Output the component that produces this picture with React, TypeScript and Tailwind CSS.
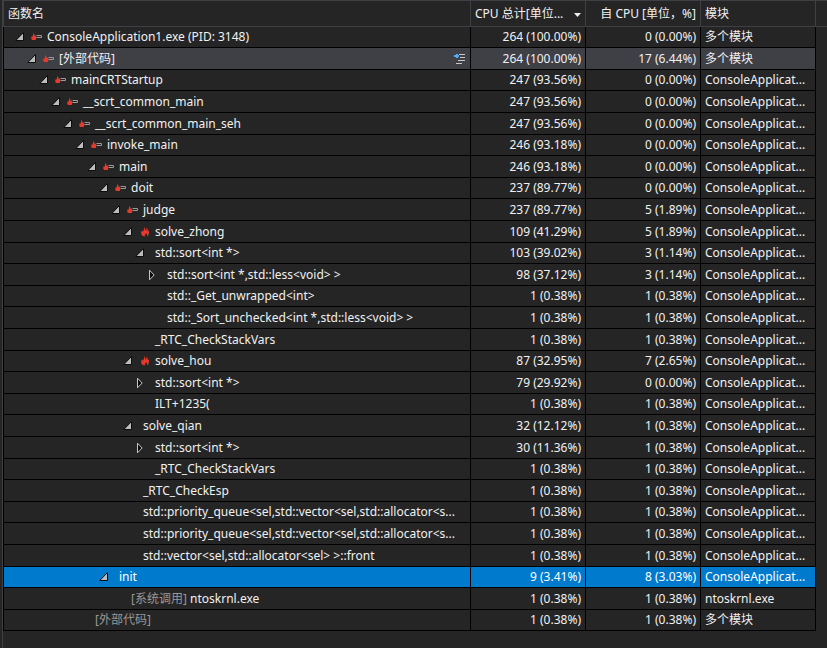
import type { ReactNode } from "react";
import { cva } from "class-variance-authority";
import clsx from "clsx";

type Icon = "path" | "flame";

interface CallNode {
  level: number;
  name: string;
  total: string;
  self: string;
  module: string;
  toggle?: "open" | "closed";
  icon?: Icon;
  prefix?: string;
  state?: "hover" | "selected";
}

const APP = "ConsoleApplicat...";
const MANY = "多个模块";

const NODES: CallNode[] = [
  { level: 0, name: "ConsoleApplication1.exe (PID: 3148)", total: "264 (100.00%)", self: "0 (0.00%)", module: MANY, toggle: "open", icon: "path" },
  { level: 1, name: "[外部代码]", total: "264 (100.00%)", self: "17 (6.44%)", module: MANY, toggle: "open", icon: "path", state: "hover" },
  { level: 2, name: "mainCRTStartup", total: "247 (93.56%)", self: "0 (0.00%)", module: APP, toggle: "open", icon: "path" },
  { level: 3, name: "__scrt_common_main", total: "247 (93.56%)", self: "0 (0.00%)", module: APP, toggle: "open", icon: "path" },
  { level: 4, name: "__scrt_common_main_seh", total: "247 (93.56%)", self: "0 (0.00%)", module: APP, toggle: "open", icon: "path" },
  { level: 5, name: "invoke_main", total: "246 (93.18%)", self: "0 (0.00%)", module: APP, toggle: "open", icon: "path" },
  { level: 6, name: "main", total: "246 (93.18%)", self: "0 (0.00%)", module: APP, toggle: "open", icon: "path" },
  { level: 7, name: "doit", total: "237 (89.77%)", self: "0 (0.00%)", module: APP, toggle: "open", icon: "path" },
  { level: 8, name: "judge", total: "237 (89.77%)", self: "5 (1.89%)", module: APP, toggle: "open", icon: "path" },
  { level: 9, name: "solve_zhong", total: "109 (41.29%)", self: "5 (1.89%)", module: APP, toggle: "open", icon: "flame" },
  { level: 10, name: "std::sort<int *>", total: "103 (39.02%)", self: "3 (1.14%)", module: APP, toggle: "open" },
  { level: 11, name: "std::sort<int *,std::less<void> >", total: "98 (37.12%)", self: "3 (1.14%)", module: APP, toggle: "closed" },
  { level: 11, name: "std::_Get_unwrapped<int>", total: "1 (0.38%)", self: "1 (0.38%)", module: APP },
  { level: 11, name: "std::_Sort_unchecked<int *,std::less<void> >", total: "1 (0.38%)", self: "1 (0.38%)", module: APP },
  { level: 10, name: "_RTC_CheckStackVars", total: "1 (0.38%)", self: "1 (0.38%)", module: APP },
  { level: 9, name: "solve_hou", total: "87 (32.95%)", self: "7 (2.65%)", module: APP, toggle: "open", icon: "flame" },
  { level: 10, name: "std::sort<int *>", total: "79 (29.92%)", self: "0 (0.00%)", module: APP, toggle: "closed" },
  { level: 10, name: "ILT+1235(", total: "1 (0.38%)", self: "1 (0.38%)", module: APP },
  { level: 9, name: "solve_qian", total: "32 (12.12%)", self: "1 (0.38%)", module: APP, toggle: "open" },
  { level: 10, name: "std::sort<int *>", total: "30 (11.36%)", self: "1 (0.38%)", module: APP, toggle: "closed" },
  { level: 10, name: "_RTC_CheckStackVars", total: "1 (0.38%)", self: "1 (0.38%)", module: APP },
  { level: 9, name: "_RTC_CheckEsp", total: "1 (0.38%)", self: "1 (0.38%)", module: APP },
  { level: 9, name: "std::priority_queue<sel,std::vector<sel,std::allocator<s...", total: "1 (0.38%)", self: "1 (0.38%)", module: APP },
  { level: 9, name: "std::priority_queue<sel,std::vector<sel,std::allocator<s...", total: "1 (0.38%)", self: "1 (0.38%)", module: APP },
  { level: 9, name: "std::vector<sel,std::allocator<sel> >::front", total: "1 (0.38%)", self: "1 (0.38%)", module: APP },
  { level: 7, name: "init", total: "9 (3.41%)", self: "8 (3.03%)", module: APP, toggle: "open", state: "selected" },
  { level: 8, prefix: "[系统调用]", name: "ntoskrnl.exe", total: "1 (0.38%)", self: "1 (0.38%)", module: "ntoskrnl.exe" },
  { level: 5, prefix: "[外部代码]", name: "", total: "1 (0.38%)", self: "1 (0.38%)", module: MANY },
];

const INDENT = 12;

const cell = cva("border-b border-r border-black p-0 px-1 leading-5", {
  variants: {
    state: {
      normal: "",
      hover: "bg-[#3f3f46]",
      selected: "bg-[#007acc] text-white",
    },
  },
});

function Toggle({ kind }: { kind: "open" | "closed" }) {
  return (
    <svg width="12" height="12" viewBox="0 0 12 12">
      {kind === "open" ? (
        <path d="M8.5 1.5 V9.5 H0.8 Z" fill="#bdbdbd" stroke="#0c0c0c" strokeWidth="1" />
      ) : (
        <path d="M2.5 1.2 L7.2 6 L2.5 10.8 Z" fill="#0c0c0c" stroke="#c8c8c8" strokeWidth="1" />
      )}
    </svg>
  );
}

function HotPathIcon() {
  return (
    <svg width="12" height="10" viewBox="0 0 12 10">
      <path d="M2.6 1 C3.4 2 3.2 3 4 4 L4.6 3.2 C5.4 5 5.6 6.6 4.6 8 H1 C0 6.6 0 5.4 0.8 4.2 L1.4 4.8 C2.2 3.6 1.8 2.2 2.6 1 Z" fill="#e8392b" />
      <path d="M5.5 3.5 H10.5 V5.5 H5.5" fill="none" stroke="#9a9a9a" strokeWidth="1" />
    </svg>
  );
}

function FlameIcon() {
  return (
    <svg width="12" height="10" viewBox="-1 0 12 10">
      <path
        d="M4.6 0 C5.4 1.4 5 2.6 5.4 3.6 C6.4 3 6.8 1.8 6.6 0.6 C8 2 7.6 3.4 7.8 4.2 L8.6 3.2 C9.6 5.6 8.8 8.4 6.8 9.6 C7.4 8 7 7 6 6 C5.8 7 4.6 7.6 4.8 9.6 C3.4 9.6 1.4 8.8 1.2 6.6 C1 5.2 1.4 4.4 1.8 3.6 L2.6 4.8 C4 3.4 4.2 1.8 4.6 0 Z"
        fill="#e8392b"
      />
    </svg>
  );
}

function ExpandPathIcon() {
  return (
    <svg className="shrink-0" width="12" height="14" viewBox="1 0 12 14" shapeRendering="crispEdges">
      <path d="M6 2.5 H12 M7 5.5 H12 M5 8.5 H12 M3 11.5 H9" stroke="#c8c8c8" strokeWidth="1" />
      <path d="M1 3 H3 V2 H5 V3 H6 V5 H5 V6 H3 V5 H1 Z" fill="#55aaee" />
    </svg>
  );
}

function NameCell({ node }: { node: CallNode }) {
  const { level, toggle, icon, prefix, name, state } = node;
  return (
    <div className="flex h-5 items-center">
      <div className="flex min-w-0 flex-1 items-center" style={{ paddingLeft: level * INDENT + 7 }}>
        <span className={clsx("flex shrink-0", icon ? "w-4" : "w-5")}>
          {toggle && (
            <button type="button" aria-label={`${toggle === "open" ? "折叠" : "展开"} ${name}`}>
              <Toggle kind={toggle} />
            </button>
          )}
        </span>
        {icon && (
          <span className="flex w-4 shrink-0">{icon === "path" ? <HotPathIcon /> : <FlameIcon />}</span>
        )}
        <span className="whitespace-nowrap">
          {prefix && <span className="text-[#999999]">{prefix}</span>}
          {prefix && name && " "}
          {name}
        </span>
      </div>
      {state === "hover" && <ExpandPathIcon />}
    </div>
  );
}

function HeaderCell({ children, className }: { children?: ReactNode; className?: string }) {
  return (
    <th
      scope="col"
      className={clsx("h-[27px] border-b border-t border-r border-[#3f3f46] p-0 px-1 font-normal", className)}
    >
      {children}
    </th>
  );
}

export default function App() {
  return (
    <div className="flex min-h-screen bg-[#252526] pl-0.5 font-['Noto_Sans','Noto_Sans_CJK_SC',sans-serif] text-[12px] text-[#f1f1f1]">
      <div className="min-w-0 flex-1 border-l border-[#3f3f46]">
        <table className="w-full table-fixed border-separate border-spacing-0">
          <colgroup>
            <col />
            <col className="w-[115px]" />
            <col className="w-[115px]" />
            <col className="w-[115px]" />
            <col className="w-[11px]" />
          </colgroup>
          <thead>
            <tr>
              <HeaderCell className="border-l text-left">函数名</HeaderCell>
              <HeaderCell>
                <button type="button" className="flex w-full items-center justify-between whitespace-nowrap">
                  CPU 总计[单位...
                  <svg width="8" height="8" viewBox="0 0 8 8">
                    <path d="M1 3 H8 L4.5 7 Z" fill="#f1f1f1" />
                  </svg>
                </button>
              </HeaderCell>
              <HeaderCell className="whitespace-nowrap text-right">自 CPU [单位，%]</HeaderCell>
              <HeaderCell className="text-left">模块</HeaderCell>
              <td className="border-b border-t border-[#3f3f46] p-0" />
            </tr>
          </thead>
          <tbody>
            {NODES.map((node, i) => {
              const td = cell({ state: node.state ?? "normal" });
              return (
                <tr key={i} className="h-[22px] nth-[5n+1]:h-[21px] nth-[5n+3]:h-[21px]">
                  <td className={clsx(td, "border-l")}>
                    <NameCell node={node} />
                  </td>
                  <td className={clsx(td, "text-right")}>{node.total}</td>
                  <td className={clsx(td, "text-right")}>{node.self}</td>
                  <td className={clsx(td, "whitespace-nowrap")}>{node.module}</td>
                </tr>
              );
            })}
          </tbody>
        </table>
      </div>
    </div>
  );
}
